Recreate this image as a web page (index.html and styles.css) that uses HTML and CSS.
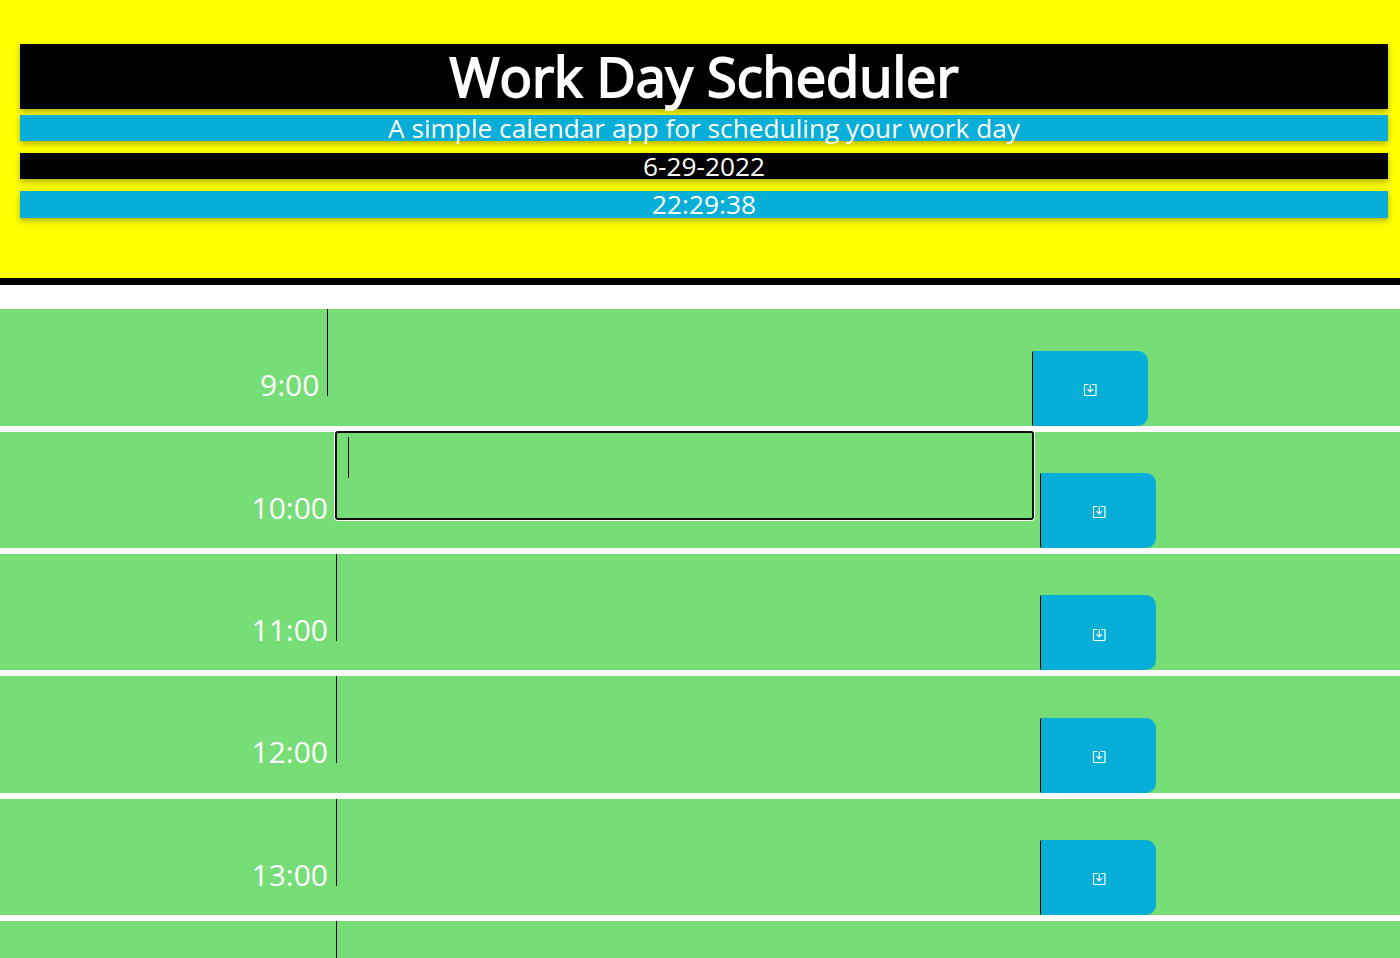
FILE: index.html
```html
<!DOCTYPE html>
<html lang="en">
<head>
<meta charset="utf-8">
<title>Work Day Scheduler</title>
<link rel="stylesheet" href="styles.css">
</head>
<body>
<svg class="sprite" aria-hidden="true">
  <symbol id="save" viewBox="0 0 14 14">
    <path d="M5.6 1.5H2Q1.5 1.5 1.5 2V12Q1.5 12.5 2 12.5H12.5Q13 12.5 13 12V2Q13 1.5 12.5 1.5H9M7.3 1.5V8.5M4.5 6.2L7.3 9L10.1 6.2"/>
  </symbol>
</svg>
<header class="jumbotron">
  <h1 class="title">Work Day Scheduler</h1>
  <p class="bar bar-blue">A simple calendar app for scheduling your work day</p>
  <p class="bar bar-black">6-29-2022</p>
  <p class="bar bar-blue">22:29:38</p>
</header>
<main class="schedule">
  <section class="row row-short"><span class="hour">9:00</span><div class="entry"></div><button class="save" aria-label="Save"><svg class="icon"><use href="#save"/></svg></button></section>
  <section class="row"><span class="hour">10:00</span><div class="entry entry-focused"><span class="caret"></span></div><button class="save" aria-label="Save"><svg class="icon"><use href="#save"/></svg></button></section>
  <section class="row"><span class="hour">11:00</span><div class="entry"></div><button class="save" aria-label="Save"><svg class="icon"><use href="#save"/></svg></button></section>
  <section class="row"><span class="hour">12:00</span><div class="entry"></div><button class="save" aria-label="Save"><svg class="icon"><use href="#save"/></svg></button></section>
  <section class="row"><span class="hour">13:00</span><div class="entry"></div><button class="save" aria-label="Save"><svg class="icon"><use href="#save"/></svg></button></section>
  <section class="row row-last"><span class="hour"></span><div class="entry"></div></section>
</main>
</body>
</html>
```
FILE: styles.css
```css
* { box-sizing: border-box; }
html, body { height: 100%; }
body { display: flex; flex-direction: column; margin: 0; overflow: hidden; background: #fff; color: #fff; font-family: "Open Sans", sans-serif; }
.sprite { display: none; }
.jumbotron { flex: none; height: 285px; padding: 44px 12px 0 20px; background: #ff0; border-bottom: 7px solid #000; text-align: center; }
.title, .bar { box-shadow: 0 3px 6px rgba(0, 0, 0, .3); }
.title { height: 65px; margin: 0 0 6px; background: #000; font-size: 54.1px; line-height: 64px; font-weight: 400; -webkit-text-stroke: 1.9px #fff; }
.bar { height: 26px; margin: 0 0 12px; font-size: 26.25px; line-height: 26px; }
.bar:last-child { height: 27px; }
.bar-blue { background: #06aed8; }
.bar-black { background: #000; }
.schedule { display: flex; flex: 1; min-height: 0; flex-direction: column; gap: 6px; padding-top: 24.3px; }
.row { display: flex; flex: none; align-items: flex-start; height: 116.35px; padding-left: 228px; background: #77de77; }
.row-short { padding-left: 219.4px; }
.row-last { flex: 1; min-height: 0; height: auto; overflow: hidden; }
.row-last .entry, .row-last .hour { height: 100%; padding: 0; }
.hour { width: 100px; height: 87px; padding-top: 55.1px; font-size: 30px; line-height: 41px; text-align: right; }
.entry { width: 697px; height: 87px; margin-left: 8px; border-left: 1px solid #000; }
.entry-focused { padding: 5px 0 0 11px; border-radius: 2px; outline: 2px solid #101010; outline-offset: -1px; box-shadow: 0 0 0 2px #fff; }
.row-short .entry { width: 697.4px; margin-left: 7.8px; }
.caret { display: block; width: 1px; height: 41px; background: #000; }
.save { display: flex; align-items: center; justify-content: center; align-self: flex-end; width: 116px; height: 75px; margin-left: 7px; padding: 3.7px 0 0; border: 0 solid #000; border-left-width: 1px; border-radius: 2px 10px 10px 2px; background: #06aed8; color: #fff; }
.row-short .save { padding-right: 1px; }
.icon { width: 14px; height: 14px; fill: none; stroke: #fff; stroke-width: 1.2; }
```
